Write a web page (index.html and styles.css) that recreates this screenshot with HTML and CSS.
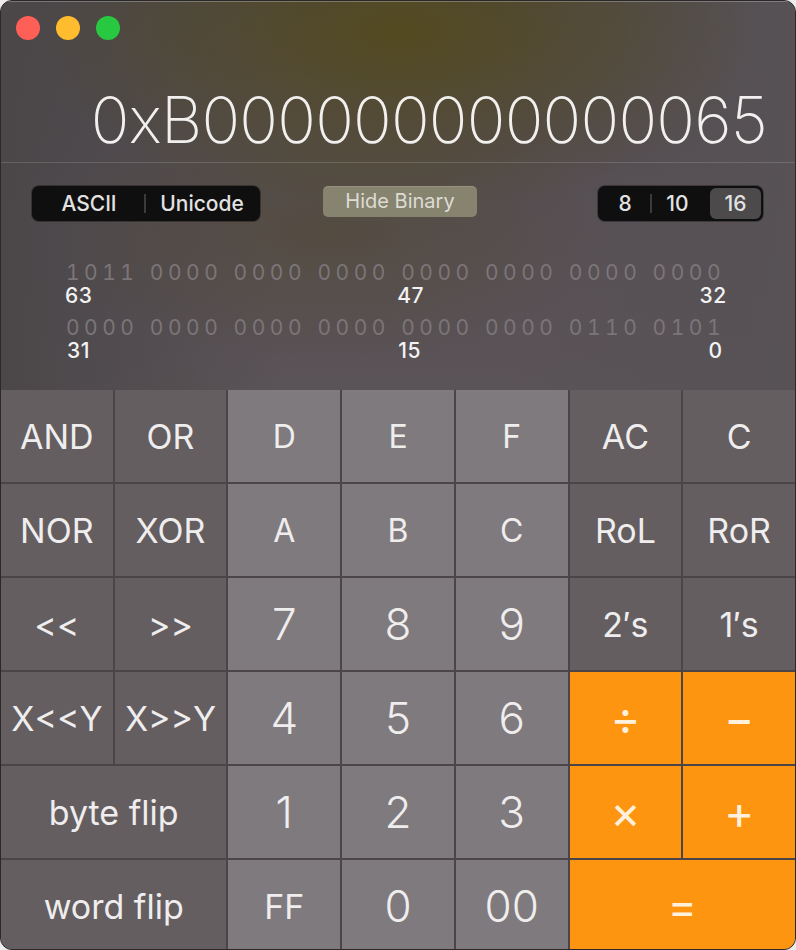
FILE: index.html
```html
<!DOCTYPE html>
<html>
<head>
<meta charset="utf-8">
<link rel="stylesheet" href="styles.css">
</head>
<body>
<div class="window">
  <div class="top">
    <div class="lights">
      <span class="light red"></span>
      <span class="light yellow"></span>
      <span class="light green"></span>
    </div>
    <div class="display">0xB000000000000065</div>
    <div class="sep"></div>
    <div class="controls">
      <div class="seg seg-text">
        <span class="seg-item">ASCII</span>
        <span class="seg-div"></span>
        <span class="seg-item">Unicode</span>
      </div>
      <div class="hide-btn">Hide Binary</div>
      <div class="seg seg-base">
        <span class="seg-item base">8</span>
        <span class="seg-div"></span>
        <span class="seg-item base">10</span>
        <span class="seg-item base selected">16</span>
      </div>
    </div>
    <div class="binary">
      <div class="bits">
        <span>1011</span><span>0000</span><span>0000</span><span>0000</span><span>0000</span><span>0000</span><span>0000</span><span>0000</span>
      </div>
      <div class="labels">
        <span class="lbl l63">63</span><span class="lbl l47">47</span><span class="lbl l32">32</span>
      </div>
      <div class="bits">
        <span>0000</span><span>0000</span><span>0000</span><span>0000</span><span>0000</span><span>0000</span><span>0110</span><span>0101</span>
      </div>
      <div class="labels">
        <span class="lbl l31">31</span><span class="lbl l15">15</span><span class="lbl l0">0</span>
      </div>
    </div>
  </div>
  <div class="keypad">
    <div class="key fn">AND</div>
    <div class="key fn">OR</div>
    <div class="key num hex">D</div>
    <div class="key num hex">E</div>
    <div class="key num hex">F</div>
    <div class="key fn">AC</div>
    <div class="key fn">C</div>

    <div class="key fn">NOR</div>
    <div class="key fn">XOR</div>
    <div class="key num hex">A</div>
    <div class="key num hex">B</div>
    <div class="key num hex">C</div>
    <div class="key fn">RoL</div>
    <div class="key fn">RoR</div>

    <div class="key fn">&lt;&lt;</div>
    <div class="key fn">&gt;&gt;</div>
    <div class="key num">7</div>
    <div class="key num">8</div>
    <div class="key num">9</div>
    <div class="key fn">2′s</div>
    <div class="key fn">1′s</div>

    <div class="key fn">X&lt;&lt;Y</div>
    <div class="key fn">X&gt;&gt;Y</div>
    <div class="key num">4</div>
    <div class="key num">5</div>
    <div class="key num">6</div>
    <div class="key op">÷</div>
    <div class="key op">−</div>

    <div class="key fn span2">byte flip</div>
    <div class="key num">1</div>
    <div class="key num">2</div>
    <div class="key num">3</div>
    <div class="key op">×</div>
    <div class="key op">+</div>

    <div class="key fn span2">word flip</div>
    <div class="key num hex ff">FF</div>
    <div class="key num">0</div>
    <div class="key num">00</div>
    <div class="key op span2 eq">=</div>
  </div>
</div>
</body>
</html>
```

FILE: styles.css
```css
* { box-sizing: border-box; }

html, body {
  margin: 0;
  padding: 0;
  background: #ececec;
}

body {
  width: 796px;
  height: 950px;
  overflow: hidden;
  font-family: "Inter", "Noto Sans", sans-serif;
}

.window {
  width: 796px;
  height: 950px;
  border-radius: 12px;
  overflow: hidden;
  border: 1px solid #2a2829;
  background: #4b4649;
  display: flex;
  flex-direction: column;
  position: relative;
}

.top {
  height: 389px;
  flex: none;
  background:
    radial-gradient(ellipse 360px 180px at 400px 30px, rgba(84, 74, 30, 0.95), rgba(84, 74, 30, 0) 100%),
    radial-gradient(ellipse 280px 130px at 330px 230px, rgba(80, 72, 40, 0.45), rgba(80, 72, 40, 0) 100%),
    linear-gradient(90deg, #4b4749 0%, rgba(75,71,73,0) 35%, rgba(86,80,84,0) 65%, #575256 100%),
    linear-gradient(180deg, #4d484a 0%, #574f55 55%, #5a5357 100%);
  box-shadow: inset 0 1px 0 rgba(255,255,255,0.25);
}

.lights {
  display: flex;
  gap: 16px;
  padding: 15px 0 0 15px;
}

.light {
  width: 24px;
  height: 24px;
  border-radius: 50%;
  display: block;
}
.red { background: #fe5f57; }
.yellow { background: #febc2e; }
.green { background: #28c840; }

.display {
  margin-top: 48px;
  padding-right: 28px;
  text-align: right;
  color: #f2f0ef;
  font-size: 64px;
  line-height: 64px;
  font-weight: 200;
  letter-spacing: -0.75px;
  white-space: nowrap;
}

.sep {
  margin-top: 10px;
  height: 1px;
  background: rgba(255, 255, 255, 0.14);
}

.controls {
  display: flex;
  align-items: flex-start;
  margin-top: 23px;
  padding: 0 32px 0 31px;
}

.seg {
  height: 35px;
  background: #0f0f0f;
  border-radius: 7px;
  display: flex;
  align-items: center;
  padding: 2px;
  box-shadow: 0 0 0 1px rgba(0,0,0,0.3);
}

.seg-text {
  width: 228px;
}

.seg-item {
  color: #e2e2e2;
  font-size: 21px;
  font-weight: 500;
  display: flex;
  align-items: center;
  justify-content: center;
  height: 31px;
}

.seg-text .seg-item:first-child { width: 110px; }
.seg-text .seg-item:last-child { flex: 1; }

.seg-div {
  width: 2px;
  height: 19px;
  background: #3b3b3b;
  flex: none;
}

.hide-btn {
  margin-left: 63px;
  width: 154px;
  height: 31px;
  border-radius: 5px;
  background: #86836f;
  color: #dddcd4;
  font-size: 20px;
  font-weight: 400;
  display: flex;
  align-items: center;
  justify-content: center;
  padding-bottom: 1px;
  box-shadow: inset 0 1px 0 rgba(255,255,255,0.12);
}

.seg-base {
  margin-left: auto;
  width: 165px;
}

.seg-item.base { width: 51px; }
.seg-base .seg-item.base:first-child { width: 50px; }
.seg-item.selected {
  margin-left: auto;
  background: #4c4a4b;
  border-radius: 6px;
  width: 51px;
}

.binary {
  margin-top: 41px;
  padding-left: 65px;
}

.bits {
  display: grid;
  grid-template-columns: repeat(8, 83.8px);
  color: #7b7578;
  font-size: 21px;
  line-height: 22px;
  letter-spacing: 4.5px;
  font-weight: 400;
  font-variant-numeric: tabular-nums;
  font-feature-settings: "tnum" 1;
}

.labels {
  display: grid;
  grid-template-columns: repeat(8, 83.8px);
  color: #f2f2f2;
  font-size: 21px;
  font-weight: 500;
  letter-spacing: 0.6px;
  line-height: 22px;
  height: 32px;
  margin-top: 1px;
}

.lbl { display: block; }
.l63 { grid-column: 1; margin-left: -1px; }
.l47 { grid-column: 5; margin-left: -4px; }
.l32 { grid-column: 8; margin-left: 47px; }
.l31 { grid-column: 1; margin-left: 1px; }
.l15 { grid-column: 5; margin-left: -3px; }
.l0 { grid-column: 8; margin-left: 56px; }

.keypad {
  flex: none;
  display: grid;
  grid-template-columns: repeat(7, 1fr);
  grid-template-rows: repeat(6, 92px);
  gap: 2px;
  background: #4b4549;
}

.key {
  display: flex;
  align-items: center;
  justify-content: center;
  color: #efeded;
  font-size: 34px;
  font-weight: 400;
  white-space: nowrap;
}

.fn { background: #645e61; }
.num { background: #7f7a7d; font-size: 44px; font-weight: 300; }
.num.hex { font-size: 32px; font-weight: 400; }
.num.ff { font-size: 34px; }
.op { background: #fe9511; color: #fff1de; font-size: 46px; font-weight: 400; }
.op.eq { font-size: 44px; }
.span2 { grid-column: span 2; }
```
